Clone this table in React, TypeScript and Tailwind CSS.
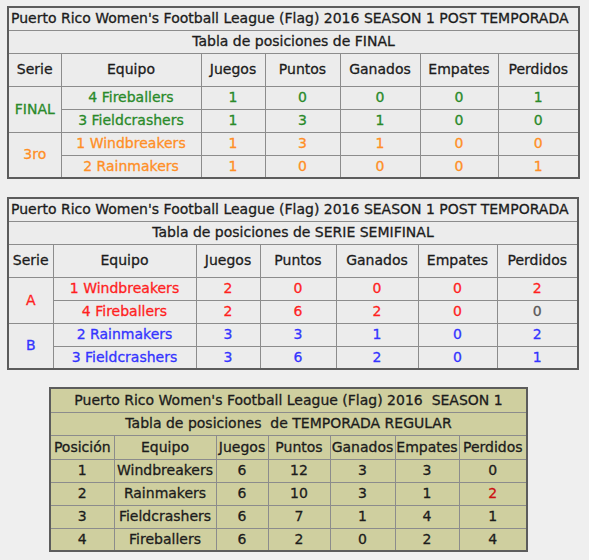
const font = { fontFamily: '"DejaVu Sans", Verdana, sans-serif' };

type Row = { cells: (string | number)[]; color: string; last?: string };

const heads = ["Equipo", "Juegos", "Puntos", "Ganados", "Empates", "Perdidos"];

const cell = "border border-[#8c8c8c] text-center font-normal whitespace-nowrap";

function PostTable({
  subtitle,
  widths,
  groups,
}: {
  subtitle: string;
  widths: number[];
  groups: { name: string; color: string; rows: Row[] }[];
}) {
  return (
    <table className="table-fixed border-collapse border-2 border-[#5c5c5c] bg-[#ececec] text-[14px] text-[#1c1c1c]">
      <colgroup>
        {widths.map((w, i) => (
          <col key={i} style={{ width: w }} />
        ))}
      </colgroup>
      <tbody>
        <tr className="h-[23px]">
          <td colSpan={7} className="border border-[#8c8c8c] px-[2px] text-left whitespace-nowrap">
            Puerto Rico Women's Football League (Flag) 2016 SEASON 1 POST TEMPORADA
          </td>
        </tr>
        <tr className="h-[23px]">
          <td colSpan={7} className={cell}>
            {subtitle}
          </td>
        </tr>
        <tr className="h-[33px]">
          <th className={cell}>Serie</th>
          {heads.map((h) => (
            <th key={h} className={cell}>
              {h}
            </th>
          ))}
        </tr>
        {groups.map((g) =>
          g.rows.map((r, i) => (
            <tr key={g.name + i} className="h-[23px]">
              {i === 0 && (
                <td rowSpan={2} className={cell} style={{ color: g.color }}>
                  {g.name}
                </td>
              )}
              {r.cells.map((c, j) => (
                <td
                  key={j}
                  className={cell}
                  style={{ color: j === r.cells.length - 1 && r.last ? r.last : r.color }}
                >
                  {c}
                </td>
              ))}
            </tr>
          ))
        )}
      </tbody>
    </table>
  );
}

const green = "#2a8a2a";
const orange = "#ff8f26";
const red = "#ff1f1f";
const blue = "#3434ff";

const regular = [
  [1, "Windbreakers", 6, 12, 3, 3, 0],
  [2, "Rainmakers", 6, 10, 3, 1, 2],
  [3, "Fieldcrashers", 6, 7, 1, 4, 1],
  [4, "Fireballers", 6, 2, 0, 2, 4],
];

export default function App() {
  return (
    <div
      className="min-h-[560px] bg-[#efefef] pt-[6px] pl-[7px] [-webkit-text-stroke:0.3px_currentColor]"
      style={font}
    >
      <PostTable
        subtitle="Tabla de posiciones  de FINAL"
        widths={[53, 140, 64, 75, 80, 78, 81]}
        groups={[
          {
            name: "FINAL",
            color: green,
            rows: [
              { cells: ["4 Fireballers", 1, 0, 0, 0, 1], color: green },
              { cells: ["3 Fieldcrashers", 1, 3, 1, 0, 0], color: green },
            ],
          },
          {
            name: "3ro",
            color: orange,
            rows: [
              { cells: ["1 Windbreakers", 1, 3, 1, 0, 0], color: orange },
              { cells: ["2 Rainmakers", 1, 0, 0, 0, 1], color: orange },
            ],
          },
        ]}
      />
      <div className="h-[18px]" />
      <PostTable
        subtitle="Tabla de posiciones de SERIE SEMIFINAL"
        widths={[45, 143, 64, 76, 82, 79, 81]}
        groups={[
          {
            name: "A",
            color: red,
            rows: [
              { cells: ["1 Windbreakers", 2, 0, 0, 0, 2], color: red },
              { cells: ["4 Fireballers", 2, 6, 2, 0, 0], color: red, last: "#5a5a5a" },
            ],
          },
          {
            name: "B",
            color: blue,
            rows: [
              { cells: ["2 Rainmakers", 3, 3, 1, 0, 2], color: blue },
              { cells: ["3 Fieldcrashers", 3, 6, 2, 0, 1], color: blue },
            ],
          },
        ]}
      />
      <div className="h-[17px]" />
      <table className="ml-[42px] table-fixed border-collapse border-2 border-[#5c5c5c] bg-[#cfcf9f] text-[14px] text-[#1c1c1c]">
        <colgroup>
          {[64, 102, 52, 62, 65, 64, 68].map((w, i) => (
            <col key={i} style={{ width: w }} />
          ))}
        </colgroup>
        <tbody>
          <tr className="h-[24px]">
            <td colSpan={7} className={cell}>
              Puerto Rico Women's Football League (Flag) 2016&nbsp; SEASON 1
            </td>
          </tr>
          <tr className="h-[23px]">
            <td colSpan={7} className={cell}>
              Tabla de posiciones&nbsp; de TEMPORADA REGULAR
            </td>
          </tr>
          <tr className="h-[24px]">
            {["Posición", ...heads].map((h) => (
              <th key={h} className={cell}>
                {h}
              </th>
            ))}
          </tr>
          {regular.map((r) => (
            <tr key={r[0]} className="h-[23px]">
              {r.map((c, j) => (
                <td
                  key={j}
                  className={cell + (j === 6 && r[0] === 2 ? " text-[#cc1111]" : "")}
                >
                  {c}
                </td>
              ))}
            </tr>
          ))}
        </tbody>
      </table>
    </div>
  );
}
